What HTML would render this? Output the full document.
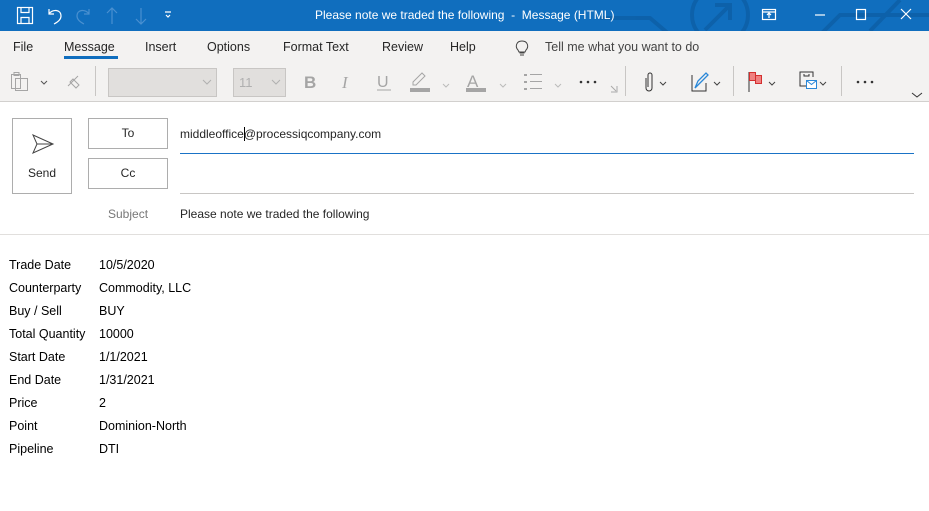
<!DOCTYPE html>
<html><head><meta charset="utf-8"><style>
*{margin:0;padding:0;box-sizing:border-box}
body{width:929px;height:511px;overflow:hidden;background:#fff;font-family:"Liberation Sans",sans-serif;position:relative;color:#262626}
.a{position:absolute;white-space:nowrap}
#tb{position:absolute;left:0;top:0;width:929px;height:31px;background:#106ebe;overflow:hidden}
#rb{position:absolute;left:0;top:31px;width:929px;height:71px;background:#f3f2f1;border-bottom:1px solid #d2d0ce}
.tab{font-size:12.5px;color:#262626;top:9px}
.btn{position:absolute;border:1px solid #adadad;background:#fff;font-size:12px;text-align:center}
.body{font-size:12.5px;color:#000}
.sep{position:absolute;top:35px;width:1px;height:30px;background:#c8c6c4}
</style></head><body>
<div id="tb">
<svg class="a" style="left:0;top:0" width="929" height="31">
<g fill="none" stroke="#0d5fa6" stroke-width="4" opacity=".8">
<circle cx="720" cy="15" r="28"/><path d="M705 30 L730 5 M715 5 H730 V20"/>
<path d="M600 18 H650 L670 35"/><path d="M820 35 L840 15 H929"/><path d="M870 31 L900 0"/>
</g>
<g fill="none" stroke="#fff" stroke-width="1.2">
<rect x="17.5" y="7.5" width="15" height="16"/><path d="M21 7.5v5h8v-5M21 23.5v-6h8v6"/>
<path d="M49 9v5h5M49 14c3-5 12-5 12 2 0 3-3 6-7 8"/>
</g>
<g fill="none" stroke="#4a90d0" stroke-width="1.2">
<path d="M89 9v5h-5M89 14c-3-5-12-5-12 2 0 3 3 6 7 8"/>
<path d="M112 24V8M107 13l5-5 5 5"/><path d="M141 8v16M136 19l5 5 5-5"/>
</g>
<path d="M165 12h6M166 15l2 2 2-2" stroke="#fff" fill="none" stroke-width="1.2"/>
<g fill="none" stroke="#fff" stroke-width="1.2">
<rect x="762.5" y="9.5" width="13" height="10"/><path d="M762.5 12h13M769 18v-5M767 15l2-2 2 2"/>
<path d="M815 15h10"/><rect x="856.5" y="9.5" width="9" height="10"/><path d="M901 9l10 10M911 9l-10 10"/>
</g>
</svg>
<div class="a" style="left:315px;top:8px;font-size:12px;color:#fff">Please note we traded the following &nbsp;-&nbsp; Message (HTML)</div>
</div>
<div id="rb">
<div class="a tab" style="left:13px">File</div>
<div class="a tab" style="left:64px">Message</div>
<div class="a" style="left:64px;top:25px;width:54px;height:3px;background:#106ebe"></div>
<div class="a tab" style="left:145px">Insert</div>
<div class="a tab" style="left:207px">Options</div>
<div class="a tab" style="left:283px">Format Text</div>
<div class="a tab" style="left:382px">Review</div>
<div class="a tab" style="left:450px">Help</div>
<svg class="a" style="left:514px;top:8px" width="16" height="18"><path d="M4 11c-3-3-2-9 4-9s7 6 4 9l-1 2H5z M5.5 14h5M6 16h4" fill="none" stroke="#444" stroke-width="1"/></svg>
<div class="a tab" style="left:545px;color:#444">Tell me what you want to do</div>
<svg class="a" style="left:0;top:31px" width="929" height="40">
<g fill="none" stroke="#a5a5a5" stroke-width="1">
<rect x="11.5" y="12.5" width="9" height="14"/><rect x="15.5" y="16.5" width="12" height="12"/><rect x="14" y="10.5" width="5" height="3"/>
<path d="M68 24l10-10M70 20l6 6 3-3-6-6z"/>
</g>
<path d="M41 19l3 3 3-3" fill="none" stroke="#555"/>
<rect x="108.5" y="6.5" width="108" height="28" fill="#e1dfdd" stroke="#c8c6c4"/>
<path d="M203 18l4 4 4-4" fill="none" stroke="#b0b0b0"/>
<rect x="233.5" y="6.5" width="52" height="28" fill="#e1dfdd" stroke="#c8c6c4"/>
<text x="239" y="25" font-size="13" fill="#b0b0b0" font-family="Liberation Sans">11</text>
<path d="M272 18l4 4 4-4" fill="none" stroke="#b0b0b0"/>
<text x="304" y="26" font-size="17" font-weight="bold" fill="#a5a5a5" font-family="Liberation Sans">B</text>
<text x="342" y="26" font-size="17" font-style="italic" fill="#a5a5a5" font-family="Liberation Serif">I</text>
<text x="377" y="25" font-size="16" fill="#a5a5a5" font-family="Liberation Sans">U</text>
<path d="M377 28h14" stroke="#a5a5a5"/>
<path d="M413 20l9-9 3 3-9 9h-3z" fill="none" stroke="#a5a5a5"/><rect x="410" y="26" width="20" height="4" fill="#a5a5a5"/>
<path d="M443 22l3 3 3-3M555 22l3 3 3-3" fill="none" stroke="#bbb"/>
<text x="467" y="25" font-size="17" fill="#a5a5a5" font-family="Liberation Sans">A</text><rect x="466" y="26" width="20" height="4" fill="#a5a5a5"/>
<path d="M500 22l3 3 3-3" fill="none" stroke="#bbb"/>
<g fill="#a5a5a5"><rect x="524" y="12" width="3" height="2"/><rect x="524" y="19" width="3" height="2"/><rect x="524" y="26" width="3" height="2"/><rect x="530" y="12" width="12" height="1"/><rect x="530" y="19" width="12" height="1"/><rect x="530" y="26" width="12" height="1"/></g>
<g fill="#333"><circle cx="581" cy="20" r="1.3"/><circle cx="588" cy="20" r="1.3"/><circle cx="595" cy="20" r="1.3"/>
<circle cx="858" cy="20" r="1.3"/><circle cx="865" cy="20" r="1.3"/><circle cx="872" cy="20" r="1.3"/></g>
<path d="M611 30h6v-6M611 24l5 5" fill="none" stroke="#aaa"/>
<path d="M646 16v10a3 3 0 0 0 6 0V13a2 2 0 0 0-4 0v12" fill="none" stroke="#333"/>
<path d="M660 20l3 3 3-3M714 20l3 3 3-3M769 20l3 3 3-3M820 20l3 3 3-3" fill="none" stroke="#444"/>
<path d="M692 13v16h14V21" fill="none" stroke="#333"/><path d="M695 26l3-7 8-8 2 2-8 8z" fill="none" stroke="#2b88d8" stroke-width="1.3"/>
<path d="M749 10v20" stroke="#333"/><rect x="749.5" y="10.5" width="6" height="8" fill="#f08080" stroke="#d32f2f"/><rect x="755.5" y="13.5" width="6" height="8" fill="#f08080" stroke="#d32f2f"/>
<path d="M806 24h-6V10h13v5M804 12v2h5v-2" fill="none" stroke="#333"/><rect x="806.5" y="18.5" width="10" height="8" fill="#fff" stroke="#2b88d8"/><path d="M806.5 18.5l5 4 5-4" fill="none" stroke="#2b88d8"/>
<path d="M912 31l5 4 5-4" fill="none" stroke="#333"/>
</svg>
<div class="sep" style="left:95px"></div><div class="sep" style="left:625px"></div><div class="sep" style="left:733px"></div><div class="sep" style="left:841px"></div>
</div>
<div class="btn" style="left:12px;top:118px;width:60px;height:76px">
<svg style="position:absolute;left:18px;top:14px" width="24" height="22"><path d="M2 2l20 9L2 20l4-9z M6 11h16" fill="none" stroke="#444" stroke-width="1"/></svg>
<div style="position:absolute;top:47px;width:100%">Send</div></div>
<div class="btn" style="left:88px;top:118px;width:80px;height:31px;line-height:29px">To</div>
<div class="btn" style="left:88px;top:158px;width:80px;height:31px;line-height:29px">Cc</div>
<div class="a" style="left:180px;top:127px;font-size:12px">middleoffice<span style="border-left:1px solid #000;margin-right:-1px"></span>@processiqcompany.com</div>
<div class="a" style="left:180px;top:153px;width:734px;height:1px;background:#1a73c6"></div>
<div class="a" style="left:180px;top:193px;width:734px;height:1px;background:#c8c6c4"></div>
<div class="a" style="left:108px;top:207px;font-size:12px;color:#777">Subject</div>
<div class="a" style="left:180px;top:207px;font-size:12px">Please note we traded the following</div>
<div class="a" style="left:0;top:234px;width:929px;height:1px;background:#e1dfdd"></div>
<div class="a body" style="left:9px;top:254px;line-height:23px">Trade Date<br>Counterparty<br>Buy / Sell<br>Total Quantity<br>Start Date<br>End Date<br>Price<br>Point<br>Pipeline</div>
<div class="a body" style="left:99px;top:254px;line-height:23px">10/5/2020<br>Commodity, LLC<br>BUY<br>10000<br>1/1/2021<br>1/31/2021<br>2<br>Dominion-North<br>DTI</div>
</body></html>
